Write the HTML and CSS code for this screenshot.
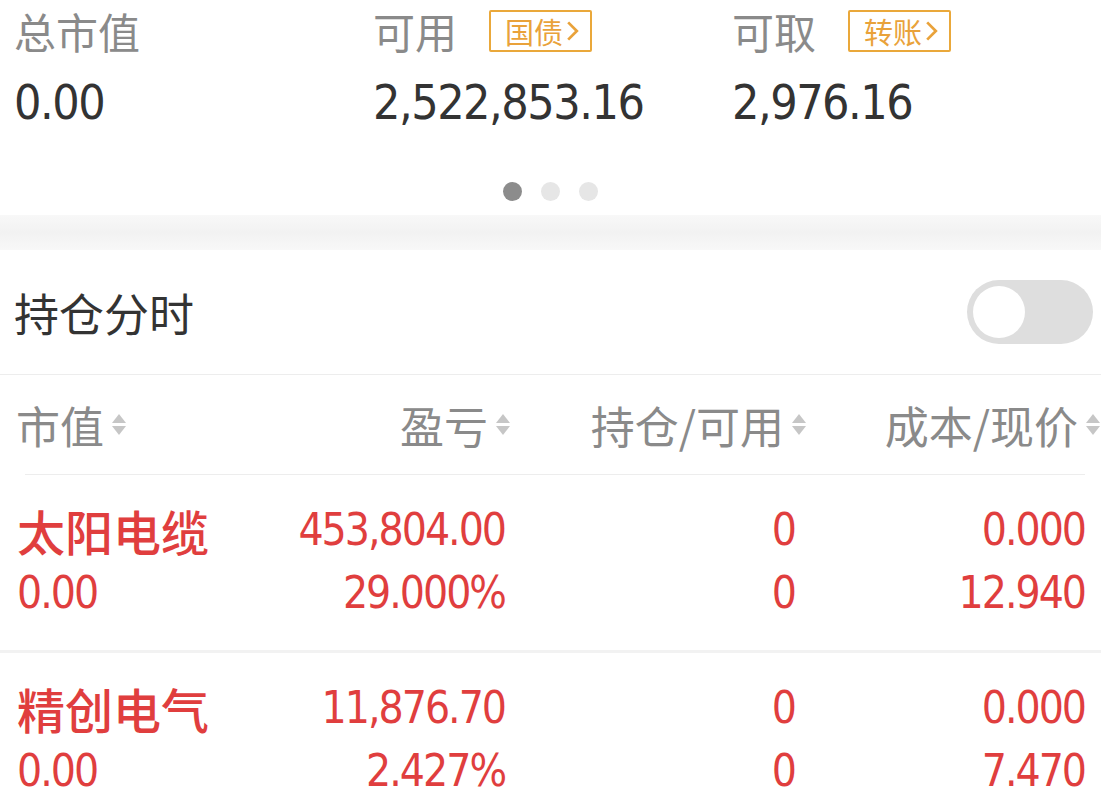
FILE: index.html
```html
<!DOCTYPE html>
<html lang="zh-CN">
<head>
  <meta charset="UTF-8" />
  <title>持仓</title>
  <link rel="stylesheet" href="styles.css">
</head>
<body>
  <section class="summary">
    <div class="summary-grid">
      <div class="summary-item">
        <div class="summary-label">总市值</div>
        <div class="summary-value">0.00</div>
      </div>
      <div class="summary-item">
        <div class="summary-label">可用 <span class="tag">国债<svg viewBox="0 0 12 20" class="tag-arrow"><path d="M2 2 L10 10 L2 18" /></svg></span></div>
        <div class="summary-value">2,522,853.16</div>
      </div>
      <div class="summary-item">
        <div class="summary-label">可取 <span class="tag">转账<svg viewBox="0 0 12 20" class="tag-arrow"><path d="M2 2 L10 10 L2 18" /></svg></span></div>
        <div class="summary-value">2,976.16</div>
      </div>
    </div>
    <div class="dots">
      <span class="dot active"></span>
      <span class="dot"></span>
      <span class="dot"></span>
    </div>
  </section>

  <div class="band"></div>

  <section class="timeshare">
    <h2 class="timeshare-title">持仓分时</h2>
    <div class="switch"><span class="switch-knob"></span></div>
  </section>

  <section class="positions">
    <div class="head-wrap">
      <div class="pos-head">
        <div class="head-cell left">市值<svg class="sort" viewBox="0 0 14 24"><path d="M0 10 L7 1 L14 10 Z" /><path d="M0 13 L7 22 L14 13 Z" /></svg></div>
        <div class="head-cell">盈亏<svg class="sort" viewBox="0 0 14 24"><path d="M0 10 L7 1 L14 10 Z" /><path d="M0 13 L7 22 L14 13 Z" /></svg></div>
        <div class="head-cell">持仓/可用<svg class="sort" viewBox="0 0 14 24"><path d="M0 10 L7 1 L14 10 Z" /><path d="M0 13 L7 22 L14 13 Z" /></svg></div>
        <div class="head-cell">成本/现价<svg class="sort" viewBox="0 0 14 24"><path d="M0 10 L7 1 L14 10 Z" /><path d="M0 13 L7 22 L14 13 Z" /></svg></div>
      </div>
    </div>

    <div class="pos-row">
      <div class="cell left">
        <div class="stock-name">太阳电缆</div>
        <div class="num">0.00</div>
      </div>
      <div class="cell">
        <div class="num">453,804.00</div>
        <div class="num">29.000%</div>
      </div>
      <div class="cell">
        <div class="num">0</div>
        <div class="num">0</div>
      </div>
      <div class="cell">
        <div class="num">0.000</div>
        <div class="num">12.940</div>
      </div>
    </div>

    <div class="pos-row">
      <div class="cell left">
        <div class="stock-name">精创电气</div>
        <div class="num">0.00</div>
      </div>
      <div class="cell">
        <div class="num">11,876.70</div>
        <div class="num">2.427%</div>
      </div>
      <div class="cell">
        <div class="num">0</div>
        <div class="num">0</div>
      </div>
      <div class="cell">
        <div class="num">0.000</div>
        <div class="num">7.470</div>
      </div>
    </div>
  </section>
</body>
</html>
```

FILE: styles.css
```css
body {
  margin: 0;
  background: #fff;
  font-family: "Noto Sans CJK SC", "Noto Sans", sans-serif;
  overflow: hidden;
}

/* Summary block */
.summary {
  padding: 0 0 0 14px;
  height: 215px;
}

.summary-grid {
  display: grid;
  grid-template-columns: 359px 359px 359px;
}

.summary-label {
  display: flex;
  align-items: center;
  gap: 32px;
  height: 62px;
  font-size: 42px;
  color: #8a8a8a;
  line-height: 1;
}

.tag {
  display: inline-flex;
  align-items: center;
  gap: 3px;
  height: 42px;
  box-sizing: border-box;
  padding: 0 11px 0 14px;
  border: 2.5px solid #eaa83a;
  border-radius: 2px;
  color: #e9a23a;
  font-size: 29px;
}

.tag-arrow {
  width: 13px;
  height: 22px;
  fill: none;
  stroke: #e9a23a;
  stroke-width: 2.5;
}

.summary-value {
  height: 80px;
  display: flex;
  align-items: center;
  font-family: "DejaVu Sans Condensed", "DejaVu Sans", sans-serif;
  font-size: 48px;
  letter-spacing: -1.5px;
  color: #333;
}

.dots {
  display: flex;
  justify-content: center;
  gap: 19px;
  margin-top: 40px;
  padding-right: 14px;
}

.dot {
  width: 19px;
  height: 19px;
  border-radius: 50%;
  background: #e6e6e6;
}

.dot.active {
  background: #8c8c8c;
}

.band {
  height: 35px;
  background: linear-gradient(#f8f8f8, #f2f2f2 50%, #f8f8f8);
}

/* Timeshare toggle row */
.timeshare {
  display: flex;
  align-items: center;
  justify-content: space-between;
  height: 124px;
  padding: 0 8px 0 14px;
  border-bottom: 1px solid #ededed;
}

.timeshare-title {
  margin: 0;
  font-size: 45px;
  font-weight: 400;
  color: #333;
}

.switch {
  width: 126px;
  height: 64px;
  border-radius: 32px;
  background: #dedede;
  display: flex;
  align-items: center;
  padding-left: 6px;
  box-sizing: border-box;
}

.switch-knob {
  width: 52px;
  height: 52px;
  border-radius: 50%;
  background: #fff;
}

/* Positions table */
.head-wrap {
  margin: 0 16px 0 25px;
  border-bottom: 1px solid #ededed;
}

.pos-head,
.pos-row {
  display: grid;
  grid-template-columns: 198px 290px 290px 290px;
}

.pos-head {
  height: 99px;
  align-items: center;
  margin-left: -8px;
}

.head-cell {
  display: flex;
  align-items: center;
  justify-content: flex-end;
  gap: 8px;
  font-size: 44px;
  color: #8a8a8a;
}

.head-cell.left {
  justify-content: flex-start;
  margin-left: -1px;
}

.head-cell:nth-child(2) {
  margin-right: -5px;
}

.head-cell:nth-child(3) {
  margin-right: -11px;
}

.head-cell:nth-child(4) {
  margin-right: -15px;
}

.sort {
  width: 14px;
  height: 24px;
  fill: #c6c6c6;
  flex-shrink: 0;
}

.pos-row {
  padding: 23px 16px 26px 17px;
  border-bottom: 3px solid #f2f2f2;
}

.cell {
  display: flex;
  flex-direction: column;
  align-items: flex-end;
  color: #e03e3e;
}

.cell.left {
  align-items: flex-start;
}

.cell > div {
  height: 63px;
  display: flex;
  align-items: center;
}

.stock-name {
  font-size: 48px;
  font-weight: 500;
}

.num {
  font-family: "DejaVu Sans Condensed", "DejaVu Sans", sans-serif;
  font-size: 44px;
  letter-spacing: -2px;
}
```
